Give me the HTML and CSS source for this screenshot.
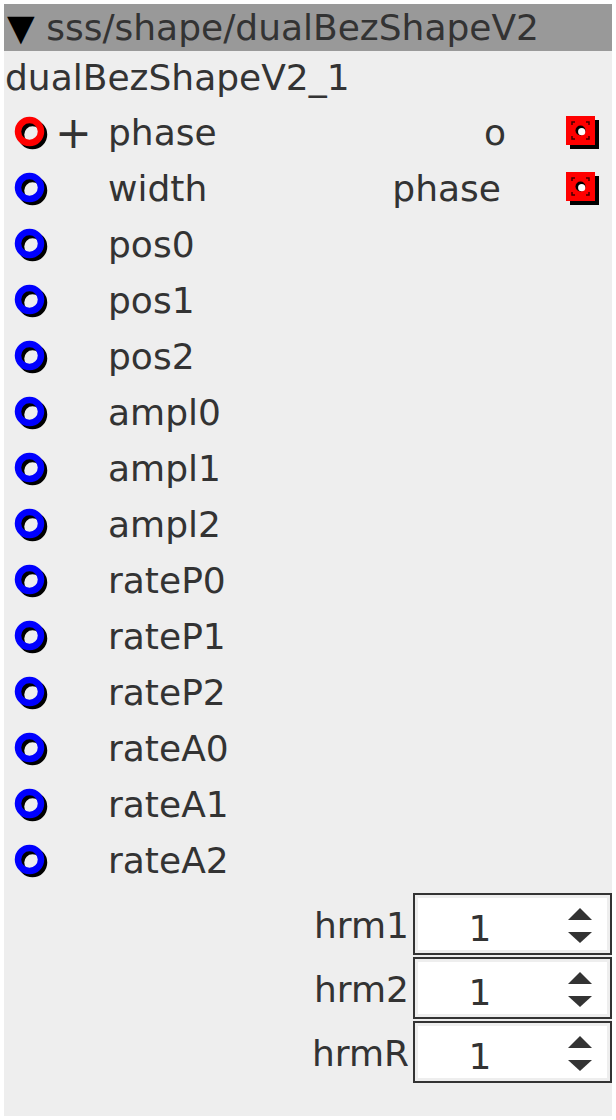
FILE: index.html
```html
<!DOCTYPE html>
<html>
<head>
<meta charset="utf-8">
<link rel="stylesheet" href="styles.css">
</head>
<body>
<div class="panel">
  <div class="header"><span class="tri">▼</span> sss/shape/dualBezShapeV2</div>
  <div class="title">dualBezShapeV2_1</div>
  <div class="ports">
    <div class="port">
      <svg class="inlet" viewBox="0 0 36 36"><circle cx="18.5" cy="19.5" r="11.5" fill="none" stroke="#000" stroke-width="6.5"/><circle cx="15.5" cy="16.5" r="11.5" fill="none" stroke="#f00" stroke-width="6.5"/></svg>
      <span class="plus">+</span>
      <span class="name">phase</span>
      <span class="out out-o">o</span>
      <svg class="outlet" viewBox="0 0 34 34"><rect x="4" y="4" width="29" height="29" fill="#000"/><rect x="0" y="0" width="29" height="29" fill="#f00"/><path d="M6 9V6H9M20 6H23V9M23 20V23H20M9 23H6V20" fill="none" stroke="#400" stroke-width="1.5"/><circle cx="14.5" cy="14.5" r="5" fill="#000"/><circle cx="15.7" cy="15.7" r="3.6" fill="#fff"/></svg>
    </div>
    <div class="port">
      <svg class="inlet" viewBox="0 0 36 36"><circle cx="18.5" cy="19.5" r="11.5" fill="none" stroke="#000" stroke-width="6.5"/><circle cx="15.5" cy="16.5" r="11.5" fill="none" stroke="#00f" stroke-width="6.5"/></svg>
      <span class="plus"></span>
      <span class="name">width</span>
      <span class="out">phase</span>
      <svg class="outlet" viewBox="0 0 34 34"><rect x="4" y="4" width="29" height="29" fill="#000"/><rect x="0" y="0" width="29" height="29" fill="#f00"/><path d="M6 9V6H9M20 6H23V9M23 20V23H20M9 23H6V20" fill="none" stroke="#400" stroke-width="1.5"/><circle cx="14.5" cy="14.5" r="5" fill="#000"/><circle cx="15.7" cy="15.7" r="3.6" fill="#fff"/></svg>
    </div>
    <div class="port">
      <svg class="inlet" viewBox="0 0 36 36"><circle cx="18.5" cy="19.5" r="11.5" fill="none" stroke="#000" stroke-width="6.5"/><circle cx="15.5" cy="16.5" r="11.5" fill="none" stroke="#00f" stroke-width="6.5"/></svg>
      <span class="plus"></span><span class="name">pos0</span>
    </div>
    <div class="port">
      <svg class="inlet" viewBox="0 0 36 36"><circle cx="18.5" cy="19.5" r="11.5" fill="none" stroke="#000" stroke-width="6.5"/><circle cx="15.5" cy="16.5" r="11.5" fill="none" stroke="#00f" stroke-width="6.5"/></svg>
      <span class="plus"></span><span class="name">pos1</span>
    </div>
    <div class="port">
      <svg class="inlet" viewBox="0 0 36 36"><circle cx="18.5" cy="19.5" r="11.5" fill="none" stroke="#000" stroke-width="6.5"/><circle cx="15.5" cy="16.5" r="11.5" fill="none" stroke="#00f" stroke-width="6.5"/></svg>
      <span class="plus"></span><span class="name">pos2</span>
    </div>
    <div class="port">
      <svg class="inlet" viewBox="0 0 36 36"><circle cx="18.5" cy="19.5" r="11.5" fill="none" stroke="#000" stroke-width="6.5"/><circle cx="15.5" cy="16.5" r="11.5" fill="none" stroke="#00f" stroke-width="6.5"/></svg>
      <span class="plus"></span><span class="name">ampl0</span>
    </div>
    <div class="port">
      <svg class="inlet" viewBox="0 0 36 36"><circle cx="18.5" cy="19.5" r="11.5" fill="none" stroke="#000" stroke-width="6.5"/><circle cx="15.5" cy="16.5" r="11.5" fill="none" stroke="#00f" stroke-width="6.5"/></svg>
      <span class="plus"></span><span class="name">ampl1</span>
    </div>
    <div class="port">
      <svg class="inlet" viewBox="0 0 36 36"><circle cx="18.5" cy="19.5" r="11.5" fill="none" stroke="#000" stroke-width="6.5"/><circle cx="15.5" cy="16.5" r="11.5" fill="none" stroke="#00f" stroke-width="6.5"/></svg>
      <span class="plus"></span><span class="name">ampl2</span>
    </div>
    <div class="port">
      <svg class="inlet" viewBox="0 0 36 36"><circle cx="18.5" cy="19.5" r="11.5" fill="none" stroke="#000" stroke-width="6.5"/><circle cx="15.5" cy="16.5" r="11.5" fill="none" stroke="#00f" stroke-width="6.5"/></svg>
      <span class="plus"></span><span class="name">rateP0</span>
    </div>
    <div class="port">
      <svg class="inlet" viewBox="0 0 36 36"><circle cx="18.5" cy="19.5" r="11.5" fill="none" stroke="#000" stroke-width="6.5"/><circle cx="15.5" cy="16.5" r="11.5" fill="none" stroke="#00f" stroke-width="6.5"/></svg>
      <span class="plus"></span><span class="name">rateP1</span>
    </div>
    <div class="port">
      <svg class="inlet" viewBox="0 0 36 36"><circle cx="18.5" cy="19.5" r="11.5" fill="none" stroke="#000" stroke-width="6.5"/><circle cx="15.5" cy="16.5" r="11.5" fill="none" stroke="#00f" stroke-width="6.5"/></svg>
      <span class="plus"></span><span class="name">rateP2</span>
    </div>
    <div class="port">
      <svg class="inlet" viewBox="0 0 36 36"><circle cx="18.5" cy="19.5" r="11.5" fill="none" stroke="#000" stroke-width="6.5"/><circle cx="15.5" cy="16.5" r="11.5" fill="none" stroke="#00f" stroke-width="6.5"/></svg>
      <span class="plus"></span><span class="name">rateA0</span>
    </div>
    <div class="port">
      <svg class="inlet" viewBox="0 0 36 36"><circle cx="18.5" cy="19.5" r="11.5" fill="none" stroke="#000" stroke-width="6.5"/><circle cx="15.5" cy="16.5" r="11.5" fill="none" stroke="#00f" stroke-width="6.5"/></svg>
      <span class="plus"></span><span class="name">rateA1</span>
    </div>
    <div class="port">
      <svg class="inlet" viewBox="0 0 36 36"><circle cx="18.5" cy="19.5" r="11.5" fill="none" stroke="#000" stroke-width="6.5"/><circle cx="15.5" cy="16.5" r="11.5" fill="none" stroke="#00f" stroke-width="6.5"/></svg>
      <span class="plus"></span><span class="name">rateA2</span>
    </div>
  </div>
  <div class="params">
    <div class="param">
      <span class="plabel">hrm1</span>
      <div class="spin"><span class="val">1</span><span class="arrows"><span class="up"></span><span class="down"></span></span></div>
    </div>
    <div class="param">
      <span class="plabel">hrm2</span>
      <div class="spin"><span class="val">1</span><span class="arrows"><span class="up"></span><span class="down"></span></span></div>
    </div>
    <div class="param">
      <span class="plabel">hrmR</span>
      <div class="spin"><span class="val">1</span><span class="arrows"><span class="up"></span><span class="down"></span></span></div>
    </div>
  </div>
</div>
</body>
</html>
```

FILE: styles.css
```css
html, body {
  margin: 0;
  padding: 0;
  background: #fff;
}
body {
  padding: 4px;
  font-family: "DejaVu Sans", sans-serif;
  font-size: 36px;
  color: #333;
}
.panel {
  width: 608px;
  height: 1112px;
  background: #eee;
  display: flex;
  flex-direction: column;
}
.header {
  height: 47px;
  line-height: 47px;
  background: #999;
  padding-left: 3px;
  white-space: nowrap;
  overflow: hidden;
}
.tri {
  color: #000;
}
.title {
  height: 54px;
  line-height: 54px;
  padding-left: 1px;
}
.ports {
  display: flex;
  flex-direction: column;
}
.port {
  height: 56px;
  display: grid;
  grid-template-columns: 50px 54px 1fr auto 111px;
  align-items: center;
}
.inlet {
  width: 36px;
  height: 36px;
  margin-left: 10px;
  display: block;
}
.plus {
  line-height: 56px;
  font-size: 44px;
  padding-left: 1px;
}
.name {
  line-height: 56px;
}
.out {
  line-height: 56px;
  text-align: right;
}
.out-o {
  margin-right: -5px;
}
.outlet {
  width: 34px;
  height: 34px;
  margin-left: 65px;
  display: block;
}
.params {
  margin-top: 4px;
  display: flex;
  flex-direction: column;
  gap: 2px;
}
.param {
  display: flex;
  justify-content: flex-end;
  align-items: center;
  height: 62px;
}
.plabel {
  margin-right: 4px;
  padding-top: 2px;
}
.spin {
  width: 195px;
  height: 58px;
  border: 2px solid #333;
  background: #fff;
  box-shadow: inset 0 0 0 3px #eee;
  display: flex;
  align-items: center;
}
.val {
  width: 130px;
  text-align: center;
  padding-top: 9px;
}
.arrows {
  margin-left: 23px;
  display: flex;
  flex-direction: column;
  gap: 12px;
  padding-top: 2px;
}
.up, .down {
  width: 0;
  height: 0;
  border-left: 12px solid transparent;
  border-right: 12px solid transparent;
}
.up {
  border-bottom: 12px solid #333;
}
.down {
  border-top: 11px solid #333;
}
```
